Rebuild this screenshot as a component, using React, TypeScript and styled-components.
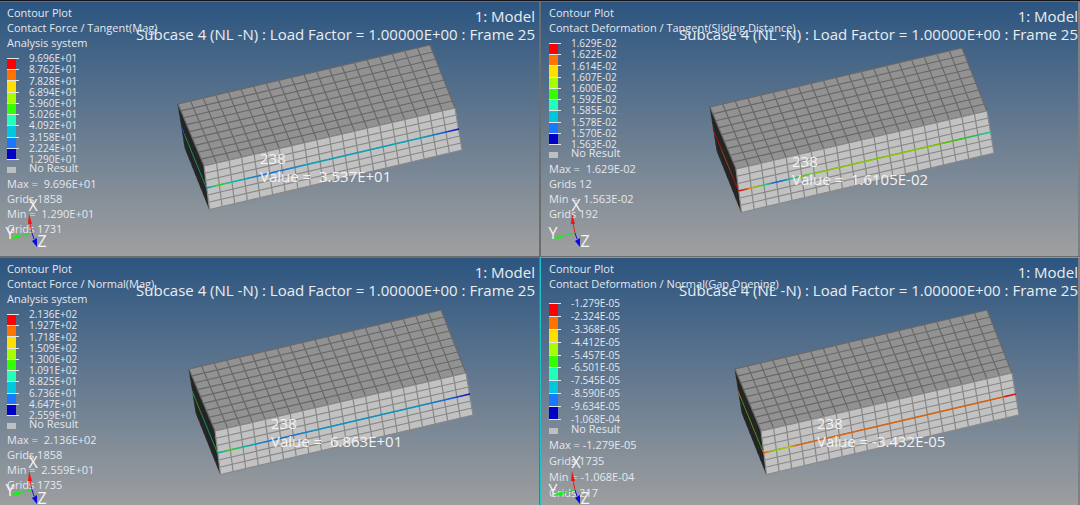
import React from "react";
import styled, { createGlobalStyle } from "styled-components";

const Global = createGlobalStyle`
  * { box-sizing: border-box; }
  body { margin: 0; background: #6d6d6d; }
  body, svg text { font-family: "Open Sans", "Noto Sans", sans-serif; }
`;

const Workspace = styled.main`
  display: grid;
  grid-template-columns: 1fr 1fr;
  grid-template-rows: 254fr 247fr;
  gap: 2px;
  min-height: 100vh;
  padding-top: 1px;
  border-top: 1px solid #17151a;
  background: #6d6d6d;
`;

const Panel = styled.section<{ $active?: boolean; $last?: boolean }>`
  position: relative;
  display: grid;
  overflow: hidden;
  background: linear-gradient(#2c5580, #a0a0a0 254px);
  outline: ${(p) => (p.$active ? "1px solid #1cc4cc" : "none")};

  &::after {
    content: "";
    position: absolute;
    inset: 0 0 0 auto;
    width: ${(p) => (p.$last ? "2px" : "0")};
    background: #7b8086;
  }
`;

const Scene = styled.svg`
  position: absolute;
  top: 0;
  left: 0;
  width: 100%;
  height: auto;
`;

const Info = styled.div<{ $last?: boolean }>`
  grid-area: 1 / 1;
  position: relative;
  padding: 3px 0 0 ${(p) => (p.$last ? 8 : 7)}px;
  color: #e3e8ee;
  font-size: 11px;
  white-space: pre;
`;

const Line = styled.p<{ $roomy?: boolean }>`
  margin: 0;
  line-height: ${(p) => (p.$roomy ? 16 : 15)}px;
`;

const Legend = styled.div<{ $roomy?: boolean }>`
  display: flex;
  align-items: center;
  height: ${(p) => (p.$roomy ? 129 : 112)}px;
  margin-top: ${(p) => (p.$roomy ? 6 : 3)}px;
  font-size: 10px;
`;

const Scale = styled.div<{ $roomy?: boolean }>`
  display: flex;
  flex-direction: column;
  width: 12px;
  height: ${(p) => (p.$roomy ? 117 : 102)}px;
  border-bottom: 1px solid #e6e6e6;
`;

const Swatch = styled.span<{ $color: string }>`
  flex: 1;
  width: 12px;
  border-top: 1px solid #e6e6e6;
  background: linear-gradient(90deg, ${(p) => p.$color} 9px, transparent 9px);
`;

const Labels = styled.ol`
  display: flex;
  flex-direction: column;
  align-self: stretch;
  margin: 0 0 0 10px;
  padding: 0;
  list-style: none;
`;

const Label = styled.li`
  display: flex;
  flex: 1;
  align-items: center;
  min-height: 0;
  line-height: 11px;
`;

const NoResult = styled.div`
  display: flex;
  align-items: center;
  gap: 13px;
  height: 12px;
  margin: -3px 0 2px;
  line-height: 12px;

  &::before {
    content: "";
    width: 9px;
    height: 6px;
    margin-top: 3px;
    background: #c0bfc0;
  }
`;

const Title = styled.header<{ $edge: number }>`
  grid-area: 1 / 1;
  position: relative;
  justify-self: end;
  padding: 5px ${(p) => p.$edge}px 0 0;
  color: #e9edf1;
  font-size: 15px;
  line-height: 18px;
  text-align: right;
  white-space: nowrap;
`;

const TitleLine = styled.p`
  margin: 0;
`;

const COLORS = ["#ff0000", "#ff7300", "#ffdf00", "#a6ff00", "#33ff00", "#21ffb8", "#00c7dd", "#1a78ff", "#0000c8"];

type Point = [number, number];
const A: Point = [0, 0];
const B: Point = [252, -59];
const C: Point = [277, 4];
const D: Point = [26, 62];
const E: Point = [284, 46];
const F: Point = [31.5, 105.5];
const G: Point = [7, 44];

const mix = (p: Point, q: Point, t: number): Point => [p[0] + (q[0] - p[0]) * t, p[1] + (q[1] - p[1]) * t];
const seg = (p: Point, q: Point) => `M${p[0].toFixed(2)} ${p[1].toFixed(2)}L${q[0].toFixed(2)} ${q[1].toFixed(2)}`;
const face = (...pts: Point[]) => pts.map((p) => p.join(",")).join(" ");

/* Grid of a four-cornered face: `cols` cells along p-q, `rows` cells along p-s. */
function grid(p: Point, q: Point, r: Point, s: Point, cols: number, rows: number) {
  let d = "";
  for (let i = 0; i <= cols; i++) d += seg(mix(p, q, i / cols), mix(s, r, i / cols));
  for (let j = 0; j <= rows; j++) d += seg(mix(p, s, j / rows), mix(q, r, j / rows));
  return d;
}

const TOP_GRID = grid(A, B, C, D, 20, 9);
const FRONT_GRID = grid(D, C, E, F, 20, 6);
const SIDE_GRID = grid(A, D, F, G, 9, 6);

type Stop = [number, string];

interface Plot {
  id: string;
  heading: string[];
  values: string[];
  stats: string[];
  reading: string;
  origin: Point;
  axes: Point;
  front: Stop[];
  side: Stop[];
  edge: number;
  roomy?: boolean;
  active?: boolean;
  last?: boolean;
}

const PLOTS: Plot[] = [
  {
    id: "force-tangent",
    heading: ["Contour Plot", "Contact Force / Tangent(Mag)", "Analysis system"],
    values: ["9.696E+01", "8.762E+01", "7.828E+01", "6.894E+01", "5.960E+01", "5.026E+01", "4.092E+01", "3.158E+01", "2.224E+01", "1.290E+01"],
    stats: ["Max =  9.696E+01", "Grids 1858", "Min =  1.290E+01", "Grids 1731"],
    reading: "Value =  3.537E+01",
    origin: [178, 102],
    axes: [32, 231],
    front: [[0, "#1c76d0"], [0.02, "#10c0a0"], [0.05, "#35d010"], [0.09, "#16bfa0"], [0.15, "#0aa6bd"], [0.22, "#1c72d8"], [0.3, "#1c78d0"], [0.4, "#0aa2b8"], [0.85, "#0aa2b8"], [0.93, "#1c66d8"], [1, "#1010b8"]],
    side: [[0, "#1850c0"], [0.12, "#1850c0"], [0.18, "#128c60"], [0.9, "#128c60"], [1, "#1c70c0"]],
    edge: 4,
  },
  {
    id: "deformation-tangent",
    heading: ["Contour Plot", "Contact Deformation / Tangent(Sliding Distance)"],
    values: ["1.629E-02", "1.622E-02", "1.614E-02", "1.607E-02", "1.600E-02", "1.592E-02", "1.585E-02", "1.578E-02", "1.570E-02", "1.563E-02"],
    stats: ["Max =  1.629E-02", "Grids 12", "Min =  1.563E-02", "Grids 192"],
    reading: "Value =  1.6105E-02",
    origin: [169, 105],
    axes: [34, 231],
    front: [[0, "#d01010"], [0.03, "#d84010"], [0.05, "#d8a000"], [0.08, "#70c810"], [0.11, "#20c890"], [0.14, "#1868d0"], [0.17, "#1868d0"], [0.2, "#10b0b8"], [0.25, "#48c820"], [0.3, "#84c800"], [0.75, "#84c800"], [0.88, "#38c010"], [0.94, "#20c070"], [1, "#22c8a4"]],
    side: [[0, "#b01010"], [0.25, "#a01010"], [0.4, "#984010"], [0.65, "#984010"], [0.8, "#981010"], [1, "#d01010"]],
    edge: 2,
    last: true,
  },
  {
    id: "force-normal",
    heading: ["Contour Plot", "Contact Force / Normal(Mag)", "Analysis system"],
    values: ["2.136E+02", "1.927E+02", "1.718E+02", "1.509E+02", "1.300E+02", "1.091E+02", "8.825E+01", "6.736E+01", "4.647E+01", "2.559E+01"],
    stats: ["Max =  2.136E+02", "Grids 1858", "Min =  2.559E+01", "Grids 1735"],
    reading: "Value =  6.863E+01",
    origin: [189, 111],
    axes: [32, 232],
    front: [[0, "#10a0b8"], [0.02, "#10b890"], [0.05, "#40d000"], [0.09, "#16bf90"], [0.14, "#0aa2bd"], [0.2, "#1c72d8"], [0.3, "#1c72d8"], [0.38, "#0a94c0"], [0.8, "#0a94c0"], [0.92, "#1c60d8"], [1, "#1010b8"]],
    side: [[0, "#10a0b8"], [0.12, "#309010"], [0.25, "#309010"], [0.4, "#128c60"], [0.8, "#128c60"], [0.95, "#30a010"], [1, "#10a0b8"]],
    edge: 4,
  },
  {
    id: "deformation-normal",
    heading: ["Contour Plot", "Contact Deformation / Normal(Gap Opening)"],
    values: ["-1.279E-05", "-2.324E-05", "-3.368E-05", "-4.412E-05", "-5.457E-05", "-6.501E-05", "-7.545E-05", "-8.590E-05", "-9.634E-05", "-1.068E-04"],
    stats: ["Max = -1.279E-05", "Grids 1735", "Min = -1.068E-04", "Grids 217"],
    reading: "Value = -3.432E-05",
    origin: [194, 111],
    axes: [34, 232],
    front: [[0, "#d85010"], [0.02, "#d89000"], [0.05, "#78d000"], [0.1, "#c8c000"], [0.13, "#d86810"], [0.95, "#d86010"], [0.955, "#d01818"], [1, "#d01818"]],
    side: [[0, "#c06010"], [0.1, "#a07010"], [0.15, "#408c10"], [0.5, "#5c8c10"], [0.9, "#389010"], [1, "#d06010"]],
    edge: 2,
    roomy: true,
    active: true,
    last: true,
  },
];

function Stops({ stops }: { stops: Stop[] }) {
  return (
    <>
      {stops.map(([at, color]) => (
        <stop key={at} offset={at} stopColor={color} />
      ))}
    </>
  );
}

function Mesh({ plot }: { plot: Plot }) {
  const front = `${plot.id}-front`;
  const side = `${plot.id}-side`;
  return (
    <g transform={`translate(${plot.origin.join(" ")})`}>
      <defs>
        <linearGradient id={front} gradientUnits="userSpaceOnUse" x1="28.5" y1="84" x2="281" y2="25">
          <Stops stops={plot.front} />
        </linearGradient>
        <linearGradient id={side} gradientUnits="userSpaceOnUse" x1="3" y1="22" x2="28.5" y2="84">
          <Stops stops={plot.side} />
        </linearGradient>
      </defs>
      <polygon points={face(A, D, F, G)} fill="#2e2e2e" />
      <path d={SIDE_GRID} stroke="#1c1c1c" strokeWidth="0.6" />
      <polygon points={face(A, B, C, D)} fill="#929292" />
      <path d={TOP_GRID} stroke="#686868" strokeWidth="1.2" />
      <polygon points={face(D, C, E, F)} fill="#c2c2c2" />
      <path d={FRONT_GRID} stroke="#888888" strokeWidth="1.2" />
      <path d="M3 22L28.5 84" stroke={`url(#${side})`} strokeWidth="1" />
      <path d="M28.5 84L281 25" stroke={`url(#${front})`} strokeWidth="1.5" />
      <text x="82" y="60" fontSize="15" fill="#f2f2f2">238</text>
      <text x="82" y="78" fontSize="15" fill="#f2f2f2" style={{ whiteSpace: "pre" }}>{plot.reading}</text>
    </g>
  );
}

function Axes({ at }: { at: Point }) {
  return (
    <g transform={`translate(${at.join(" ")})`} fontSize="16" fontWeight="500" fill="#f4f4f4" textAnchor="middle">
      <path d="M0 0L-2 -10" stroke="#f01c1c" />
      <polygon points="-3,-19 0,-9 -4,-9" fill="#f01414" />
      <path d="M0 0L-12 3" stroke="#18e818" />
      <polygon points="-23,6 -13,1 -12,5" fill="#18f018" />
      <path d="M0 0L2 6" stroke="#1414e0" />
      <polygon points="5,14 0,8 5,5" fill="#0a0ae8" />
      <text x="1" y="-22">X</text>
      <text x="-22" y="6">Y</text>
      <text x="10" y="14">Z</text>
    </g>
  );
}

function PlotPanel({ plot }: { plot: Plot }) {
  return (
    <Panel $active={plot.active} $last={plot.last}>
      <Scene viewBox="0 0 539 254">
        <Mesh plot={plot} />
      </Scene>
      <Info $last={plot.last}>
        {plot.heading.map((text) => (
          <Line key={text}>{text}</Line>
        ))}
        <Legend $roomy={plot.roomy}>
          <Scale $roomy={plot.roomy}>
            {COLORS.map((color) => (
              <Swatch key={color} $color={color} />
            ))}
          </Scale>
          <Labels>
            {plot.values.map((value) => (
              <Label key={value}>{value}</Label>
            ))}
          </Labels>
        </Legend>
        <NoResult>No Result</NoResult>
        {plot.stats.map((text) => (
          <Line key={text} $roomy={plot.roomy}>{text}</Line>
        ))}
      </Info>
      <Title $edge={plot.edge}>
        <TitleLine>1: Model</TitleLine>
        <TitleLine>Subcase 4 (NL -N) : Load Factor = 1.00000E+00 : Frame 25</TitleLine>
      </Title>
      <Scene viewBox="0 0 539 254">
        <Axes at={plot.axes} />
      </Scene>
    </Panel>
  );
}

export default function App() {
  return (
    <>
      <Global />
      <Workspace>
        {PLOTS.map((plot) => (
          <PlotPanel key={plot.id} plot={plot} />
        ))}
      </Workspace>
    </>
  );
}
